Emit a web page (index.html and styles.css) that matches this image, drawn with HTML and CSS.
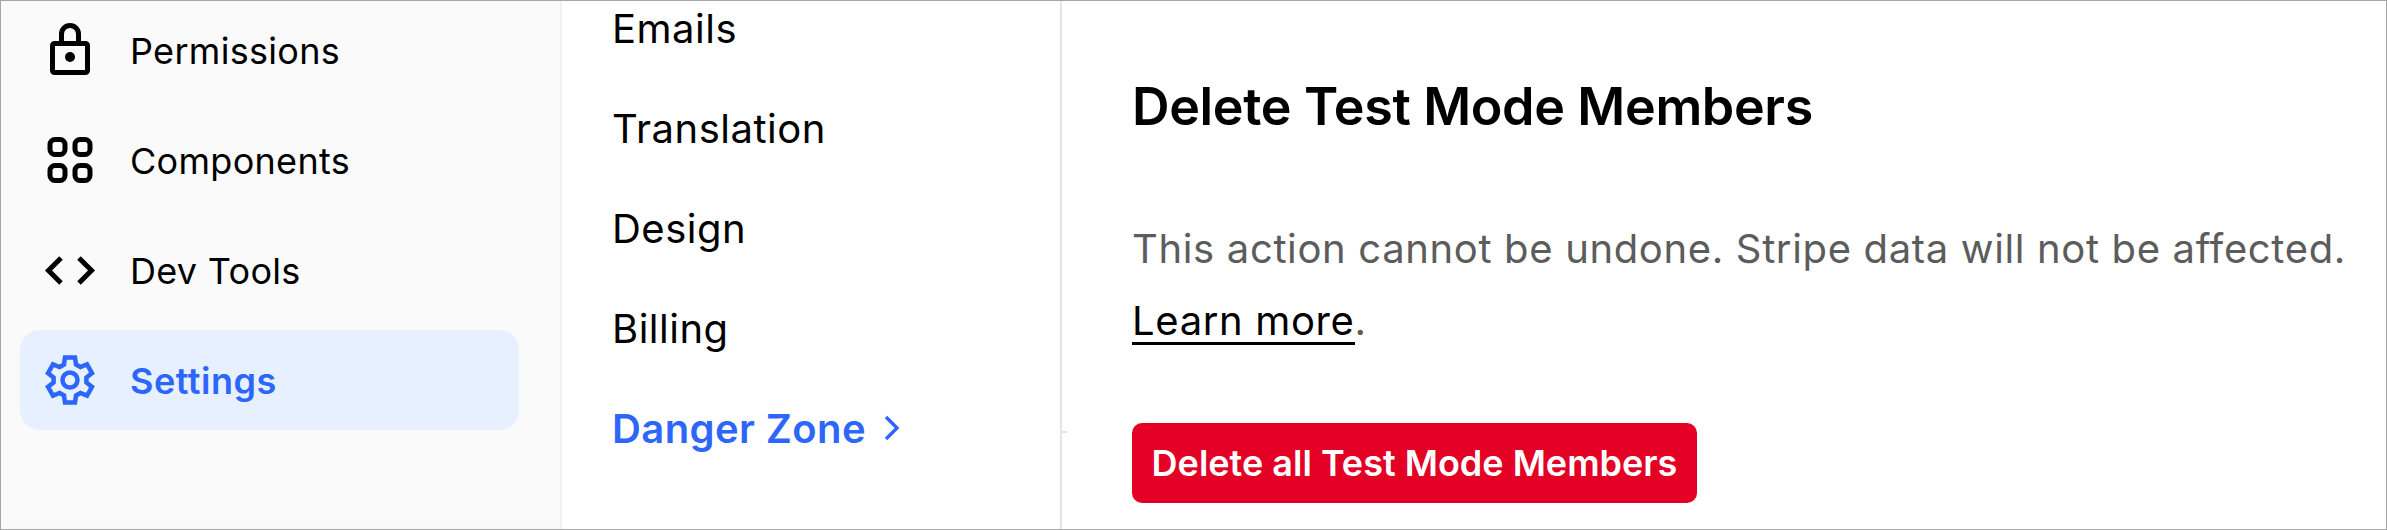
FILE: index.html
```html
<!DOCTYPE html>
<html lang="en">
<head>
<meta charset="utf-8">
<title>Danger Zone</title>
<link rel="stylesheet" href="styles.css">
</head>
<body>
<div class="frame">
  <aside class="sidebar">
    <a class="side-item">
      <svg class="icon" viewBox="0 0 60 60" fill="none" stroke="currentColor" stroke-width="5"><rect x="12.5" y="22.5" width="35" height="29" rx="2"/><path d="M21.5 22V13a8.5 8.5 0 0 1 17 0v9"/><circle cx="30" cy="36" r="5" fill="currentColor" stroke="none"/></svg>
      <span>Permissions</span>
    </a>
    <a class="side-item">
      <svg class="icon" viewBox="0 0 60 60" fill="none" stroke="currentColor" stroke-width="5"><rect x="10" y="8.5" width="15" height="15" rx="5"/><rect x="35" y="8.5" width="15" height="15" rx="5"/><rect x="10" y="34.5" width="15" height="15" rx="5"/><rect x="35" y="34.5" width="15" height="15" rx="5"/></svg>
      <span>Components</span>
    </a>
    <a class="side-item">
      <svg class="icon" viewBox="0 0 60 60" fill="none" stroke="currentColor" stroke-width="5"><path d="M21 17 8.5 29.5 21 42"/><path d="M39 17l12.5 12.5L39 42"/></svg>
      <span>Dev Tools</span>
    </a>
    <a class="side-item active">
      <svg class="icon" viewBox="0 0 60 60" fill="none" stroke="currentColor" stroke-width="4.5"><path d="M24 14.5 25 7.5H35L36 14.5 40.4 17 47 14.4 52 23.1 46.4 27.5V32.5L52 36.9 47 45.6 40.4 43 36 45.5 35 52.5H25L24 45.5 19.6 43 13 45.6 8 36.9 13.6 32.5V27.5L8 23.1 13 14.4 19.6 17Z"/><circle cx="30" cy="30" r="7.5"/></svg>
      <span>Settings</span>
    </a>
  </aside>
  <nav class="subnav">
    <a class="sub-item">Emails</a>
    <a class="sub-item">Translation</a>
    <a class="sub-item">Design</a>
    <a class="sub-item">Billing</a>
    <a class="sub-item active">Danger Zone
      <svg class="chev" viewBox="0 0 16 26" fill="none" stroke="currentColor" stroke-width="3.4"><path d="M2 2l11 11L2 24"/></svg>
    </a>
  </nav>
  <main class="content">
    <span class="tick"></span>
    <h1 class="title">Delete Test Mode Members</h1>
    <p class="desc">This action cannot be undone. Stripe data will not be affected.<br><a class="learn">Learn more</a>.</p>
    <button class="danger" type="button">Delete all Test Mode Members</button>
  </main>
</div>
</body>
</html>
```
FILE: styles.css
```css
* { box-sizing: border-box; }
html, body { margin: 0; height: 100%; overflow: hidden; }
body { background: #fff; color: #000; font-family: Inter, "Liberation Sans", sans-serif; }
.frame {
  display: flex;
  width: 2387px;
  height: 530px;
  border: 1px solid #a6a6a6;
  overflow: hidden;
}
.sidebar {
  flex: 0 0 561px;
  background: #fafafa;
  border-right: 2px solid #f0f0f2;
  padding: 0 41px 0 19px;
  margin-top: -1px;
  display: flex;
  flex-direction: column;
  gap: 10px;
}
.side-item {
  display: flex;
  align-items: center;
  flex: none;
  height: 100px;
  padding: 2px 0 0 20px;
  border-radius: 20px;
  font-size: 36px;
  letter-spacing: 0.3px;
}
.side-item.active { background: #e6f0ff; color: #2d66fa; font-weight: 600; letter-spacing: 0.5px; padding-top: 0; }
.side-item.active span { padding-top: 2px; }
.icon { width: 60px; height: 60px; margin-right: 30px; flex: none; }
.subnav {
  flex: 0 0 500px;
  border-right: 2px solid #e4e4e8;
  padding: 0 0 0 50px;
  margin-top: -23px;
  display: flex;
  flex-direction: column;
}
.sub-item {
  flex: none;
  height: 100px;
  display: flex;
  align-items: center;
  font-size: 40px;
  letter-spacing: 0.5px;
}
.sub-item.active { color: #2d66fa; font-weight: 600; letter-spacing: 0.4px; }
.chev { width: 16px; height: 26px; margin-left: 18px; }
.content { flex: 1; padding: 0 0 0 70px; position: relative; }
.tick { position: absolute; left: 0; top: 430px; width: 5px; height: 2px; background: #e4e4e8; }
.title { margin: 78px 0 0; font-size: 52px; line-height: 56px; font-weight: 600; letter-spacing: -0.35px; }
.desc { margin: 78px 0 0; font-size: 40px; line-height: 72px; color: #5c5c5c; letter-spacing: 0.65px; }
.learn { display: inline-block; line-height: 42px; color: #000; border-bottom: 3px solid #000; }
.danger {
  display: block;
  margin-top: 66px;
  width: 565px;
  height: 80px;
  border: 0;
  border-radius: 10px;
  background: #e30024;
  color: #fff;
  font: 600 36px Inter, "Liberation Sans", sans-serif;
}
```
